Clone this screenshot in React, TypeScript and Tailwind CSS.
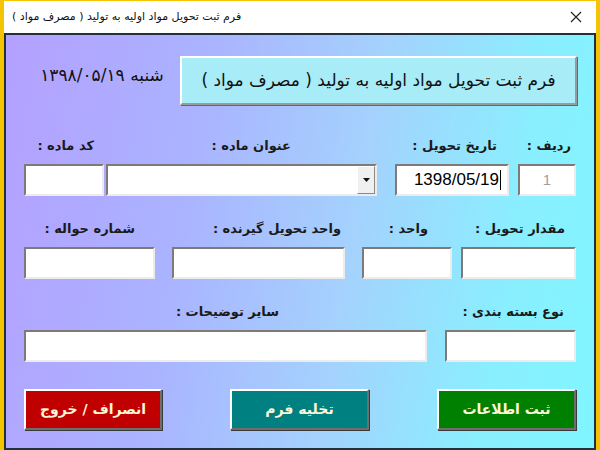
import React from 'react';

const fa = { fontFamily: '"DejaVu Sans", "Noto Sans", sans-serif' };

function Box({ className, children }: { className: string; children?: React.ReactNode }) {
  return (
    <div
      className={`h-[32px] bg-white border-2 border-t-[#7f7a77] border-l-[#7f7a77] border-b-[#ececec] border-r-[#ececec] ${className}`}
    >
      {children}
    </div>
  );
}

function Label({ className, children }: { className: string; children: React.ReactNode }) {
  return (
    <div dir="rtl" style={fa} className={`h-[18px] text-[13px] leading-[18px] font-bold text-[#1a1a1a] whitespace-nowrap ${className}`}>
      {children}
    </div>
  );
}

function Btn({ className, children }: { className: string; children: React.ReactNode }) {
  return (
    <button
      dir="rtl"
      style={fa}
      className={`h-[41px] border-2 border-t-white border-l-white border-b-[#6e6e6e] border-r-[#6e6e6e] shadow-[1px_1px_0_#3a3a3a] text-[14px] font-bold text-[#fdf6d8] ${className}`}
    >
      {children}
    </button>
  );
}

export default function App() {
  return (
    <div className="w-[600px] h-[450px] bg-[#f5c400] px-[4px] pt-[1px] flex flex-col">
      {/* title bar */}
      <div className="h-[32px] bg-white flex items-center justify-between pl-[8px] pr-[12px]">
        <div dir="rtl" style={fa} className="text-[11px] text-[#111]">
          فرم ثبت تحویل مواد اولیه به تولید ( مصرف مواد )
        </div>
        <svg width="12" height="12" viewBox="0 0 12 12" className="mr-[2px]">
          <path d="M1 1 L11 11 M11 1 L1 11" stroke="#222" strokeWidth="1.2" />
        </svg>
      </div>

      {/* body */}
      <div className="flex-1 border-2 border-[#22303c] bg-[linear-gradient(100deg,#b4a0ff_0%,#aab4ff_32%,#a4d2fd_58%,#8aeeff_82%,#80f6ff_100%)] pl-[18px] pr-[15px] pt-[21px] flex flex-col">
        {/* header */}
        <div className="flex items-center h-[49px]">
          <div dir="rtl" style={fa} className="w-[156px] text-[17px] text-[#111] text-center pb-[10px]">
            شنبه ۱۳۹۸/۰۵/۱۹
          </div>
          <div
            dir="rtl"
            style={fa}
            className="w-[397px] h-[49px] bg-[#a8ecf7] border-2 border-t-white border-l-white border-b-[#9a9a9a] border-r-[#9a9a9a] shadow-[1px_1px_0_#666] flex items-center justify-center text-[17px] text-[#111]"
          >
            فرم ثبت تحویل مواد اولیه به تولید ( مصرف مواد )
          </div>
        </div>

        {/* row 1 */}
        <div className="flex mt-[32px]">
          <div className="w-[80px] flex flex-col">
            <Label className="pr-[10px]">کد ماده :</Label>
            <Box className="mt-[9px] w-[80px]" />
          </div>
          <div className="w-[271px] ml-[2px] flex flex-col">
            <Label className="pr-[86px]">عنوان ماده :</Label>
            <Box className="mt-[9px] w-[271px] flex justify-end">
              <div className="w-[18px] h-full bg-[#f0f0f0] border border-t-white border-l-white border-b-[#8a8a8a] border-r-[#8a8a8a] flex items-center justify-center">
                <svg width="7" height="4" viewBox="0 0 7 4">
                  <path d="M0 0 H7 L3.5 4 Z" fill="#111" />
                </svg>
              </div>
            </Box>
          </div>
          <div className="w-[114px] ml-[18px] flex flex-col">
            <Label className="pr-[12px]">تاریخ تحویل :</Label>
            <Box className="mt-[9px] w-[114px] flex items-center justify-end pr-[6px]">
              <span className="text-[17px] text-black" style={{ fontFamily: '"Liberation Sans", Arial, sans-serif' }}>
                1398/05/19
              </span>
              <span className="w-px h-[20px] bg-black ml-[1px]" />
            </Box>
          </div>
          <div className="w-[58px] ml-[9px] flex flex-col">
            <Label className="pr-[5px]">ردیف :</Label>
            <Box className="mt-[9px] w-[58px] flex items-center justify-center">
              <span className="text-[15px] text-[#a0a0a0]" style={{ fontFamily: '"Liberation Sans", Arial, sans-serif' }}>
                1
              </span>
            </Box>
          </div>
        </div>

        {/* row 2 */}
        <div className="flex mt-[24px]">
          <div className="w-[131px] flex flex-col">
            <Label className="pr-[20px]">شماره حواله :</Label>
            <Box className="mt-[9px] w-[131px]" />
          </div>
          <div className="w-[173px] ml-[17px] flex flex-col">
            <Label className="pr-[4px]">واحد تحویل گیرنده :</Label>
            <Box className="mt-[9px] w-[173px]" />
          </div>
          <div className="w-[90px] ml-[17px] flex flex-col">
            <Label className="pr-[24px]">واحد :</Label>
            <Box className="mt-[9px] w-[90px]" />
          </div>
          <div className="w-[115px] ml-[9px] flex flex-col">
            <Label className="pr-[11px]">مقدار تحویل :</Label>
            <Box className="mt-[9px] w-[115px]" />
          </div>
        </div>

        {/* row 3 */}
        <div className="flex mt-[24px]">
          <div className="w-[403px] flex flex-col">
            <Label className="pr-[148px]">سایر توضیحات :</Label>
            <Box className="mt-[9px] w-[403px]" />
          </div>
          <div className="w-[131px] ml-[18px] flex flex-col">
            <Label className="pr-[12px]">نوع بسته بندی :</Label>
            <Box className="mt-[9px] w-[131px]" />
          </div>
        </div>

        {/* buttons */}
        <div className="flex mt-[27px]">
          <Btn className="w-[138px] bg-[#c00000]">انصراف / خروج</Btn>
          <Btn className="w-[139px] ml-[68px] bg-[#008080]">تخلیه فرم</Btn>
          <Btn className="w-[139px] ml-[68px] bg-[#008000]">ثبت اطلاعات</Btn>
        </div>
      </div>
    </div>
  );
}
